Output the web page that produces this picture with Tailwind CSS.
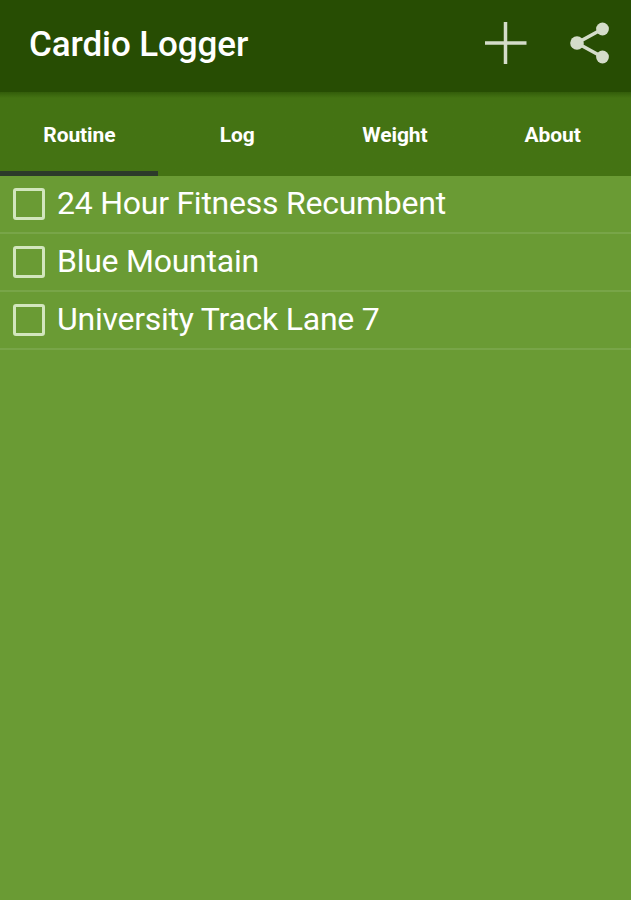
<!DOCTYPE html>
<html lang="en">
  <head>
    <meta charset="UTF-8" />
    <title>Cardio Logger</title>
    <script src="https://cdn.jsdelivr.net/npm/@tailwindcss/browser@4"></script>
  </head>
  <body class="flex h-screen flex-col overflow-hidden bg-[#6a9b34] font-[Roboto,sans-serif] text-white">
    <!-- App bar -->
    <header class="flex h-[92px] shrink-0 items-center bg-[#274d03] pr-[21px] pl-[29px]">
      <h1 class="grow pb-0.5 text-[35px] font-medium tracking-[-0.1px]">Cardio Logger</h1>
      <button class="mr-[43px] mb-[7px]" aria-label="Add">
        <svg class="block h-[42px] w-[42px]" viewBox="0 0 42 42" fill="none" stroke="#d4dcca" stroke-width="3.5">
          <path d="M20.5 0v42M0 21h41.5" />
        </svg>
      </button>
      <button class="mb-[7px]" aria-label="Share">
        <svg class="block h-[42px] w-[40px]" viewBox="0 0 40 42" fill="#d4dcca" stroke="#d4dcca">
          <path d="M32.5 7 7 21l25.500 14" fill="none" stroke-width="3.6" />
          <circle cx="32.500" cy="7" r="6.4" stroke="none" />
          <circle cx="7" cy="21" r="6.8" stroke="none" />
          <circle cx="32.500" cy="35" r="6.4" stroke="none" />
        </svg>
      </button>
    </header>

    <!-- Tabs -->
    <nav class="grid h-[84px] shrink-0 grid-cols-4 bg-[#447313] bg-linear-to-b from-[#335d0a] to-[#447313] to-[6px] text-center text-[21px] leading-[30px] font-bold tracking-[-0.1px]">
      <a class="border-b-5 border-[#2c3a2a] pt-[28px] pl-px">Routine</a>
      <a class="pt-[28px] pl-px">Log</a>
      <a class="pt-[28px] pl-px">Weight</a>
      <a class="pt-[28px] pl-px">About</a>
    </nav>

    <!-- Routines -->
    <ul class="text-[32px] tracking-[-0.25px]">
      <li class="flex h-[58px] items-center border-b-2 border-[#78a548] pl-[12.5px]">
        <span class="mr-[12.5px] h-[32px] w-[32px] rounded-[3px] border-3 border-[#d2e6bd]"></span>
        <span class="pb-[2px]">24 Hour Fitness Recumbent</span>
      </li>
      <li class="flex h-[58px] items-center border-b-2 border-[#78a548] pl-[12.5px]">
        <span class="mr-[12.5px] h-[32px] w-[32px] rounded-[3px] border-3 border-[#d2e6bd]"></span>
        <span class="pb-[2px]">Blue Mountain</span>
      </li>
      <li class="flex h-[58px] items-center border-b-2 border-[#78a548] pl-[12.5px]">
        <span class="mr-[12.5px] h-[32px] w-[32px] rounded-[3px] border-3 border-[#d2e6bd]"></span>
        <span class="pb-[2px]">University Track Lane 7</span>
      </li>
    </ul>
  </body>
</html>
